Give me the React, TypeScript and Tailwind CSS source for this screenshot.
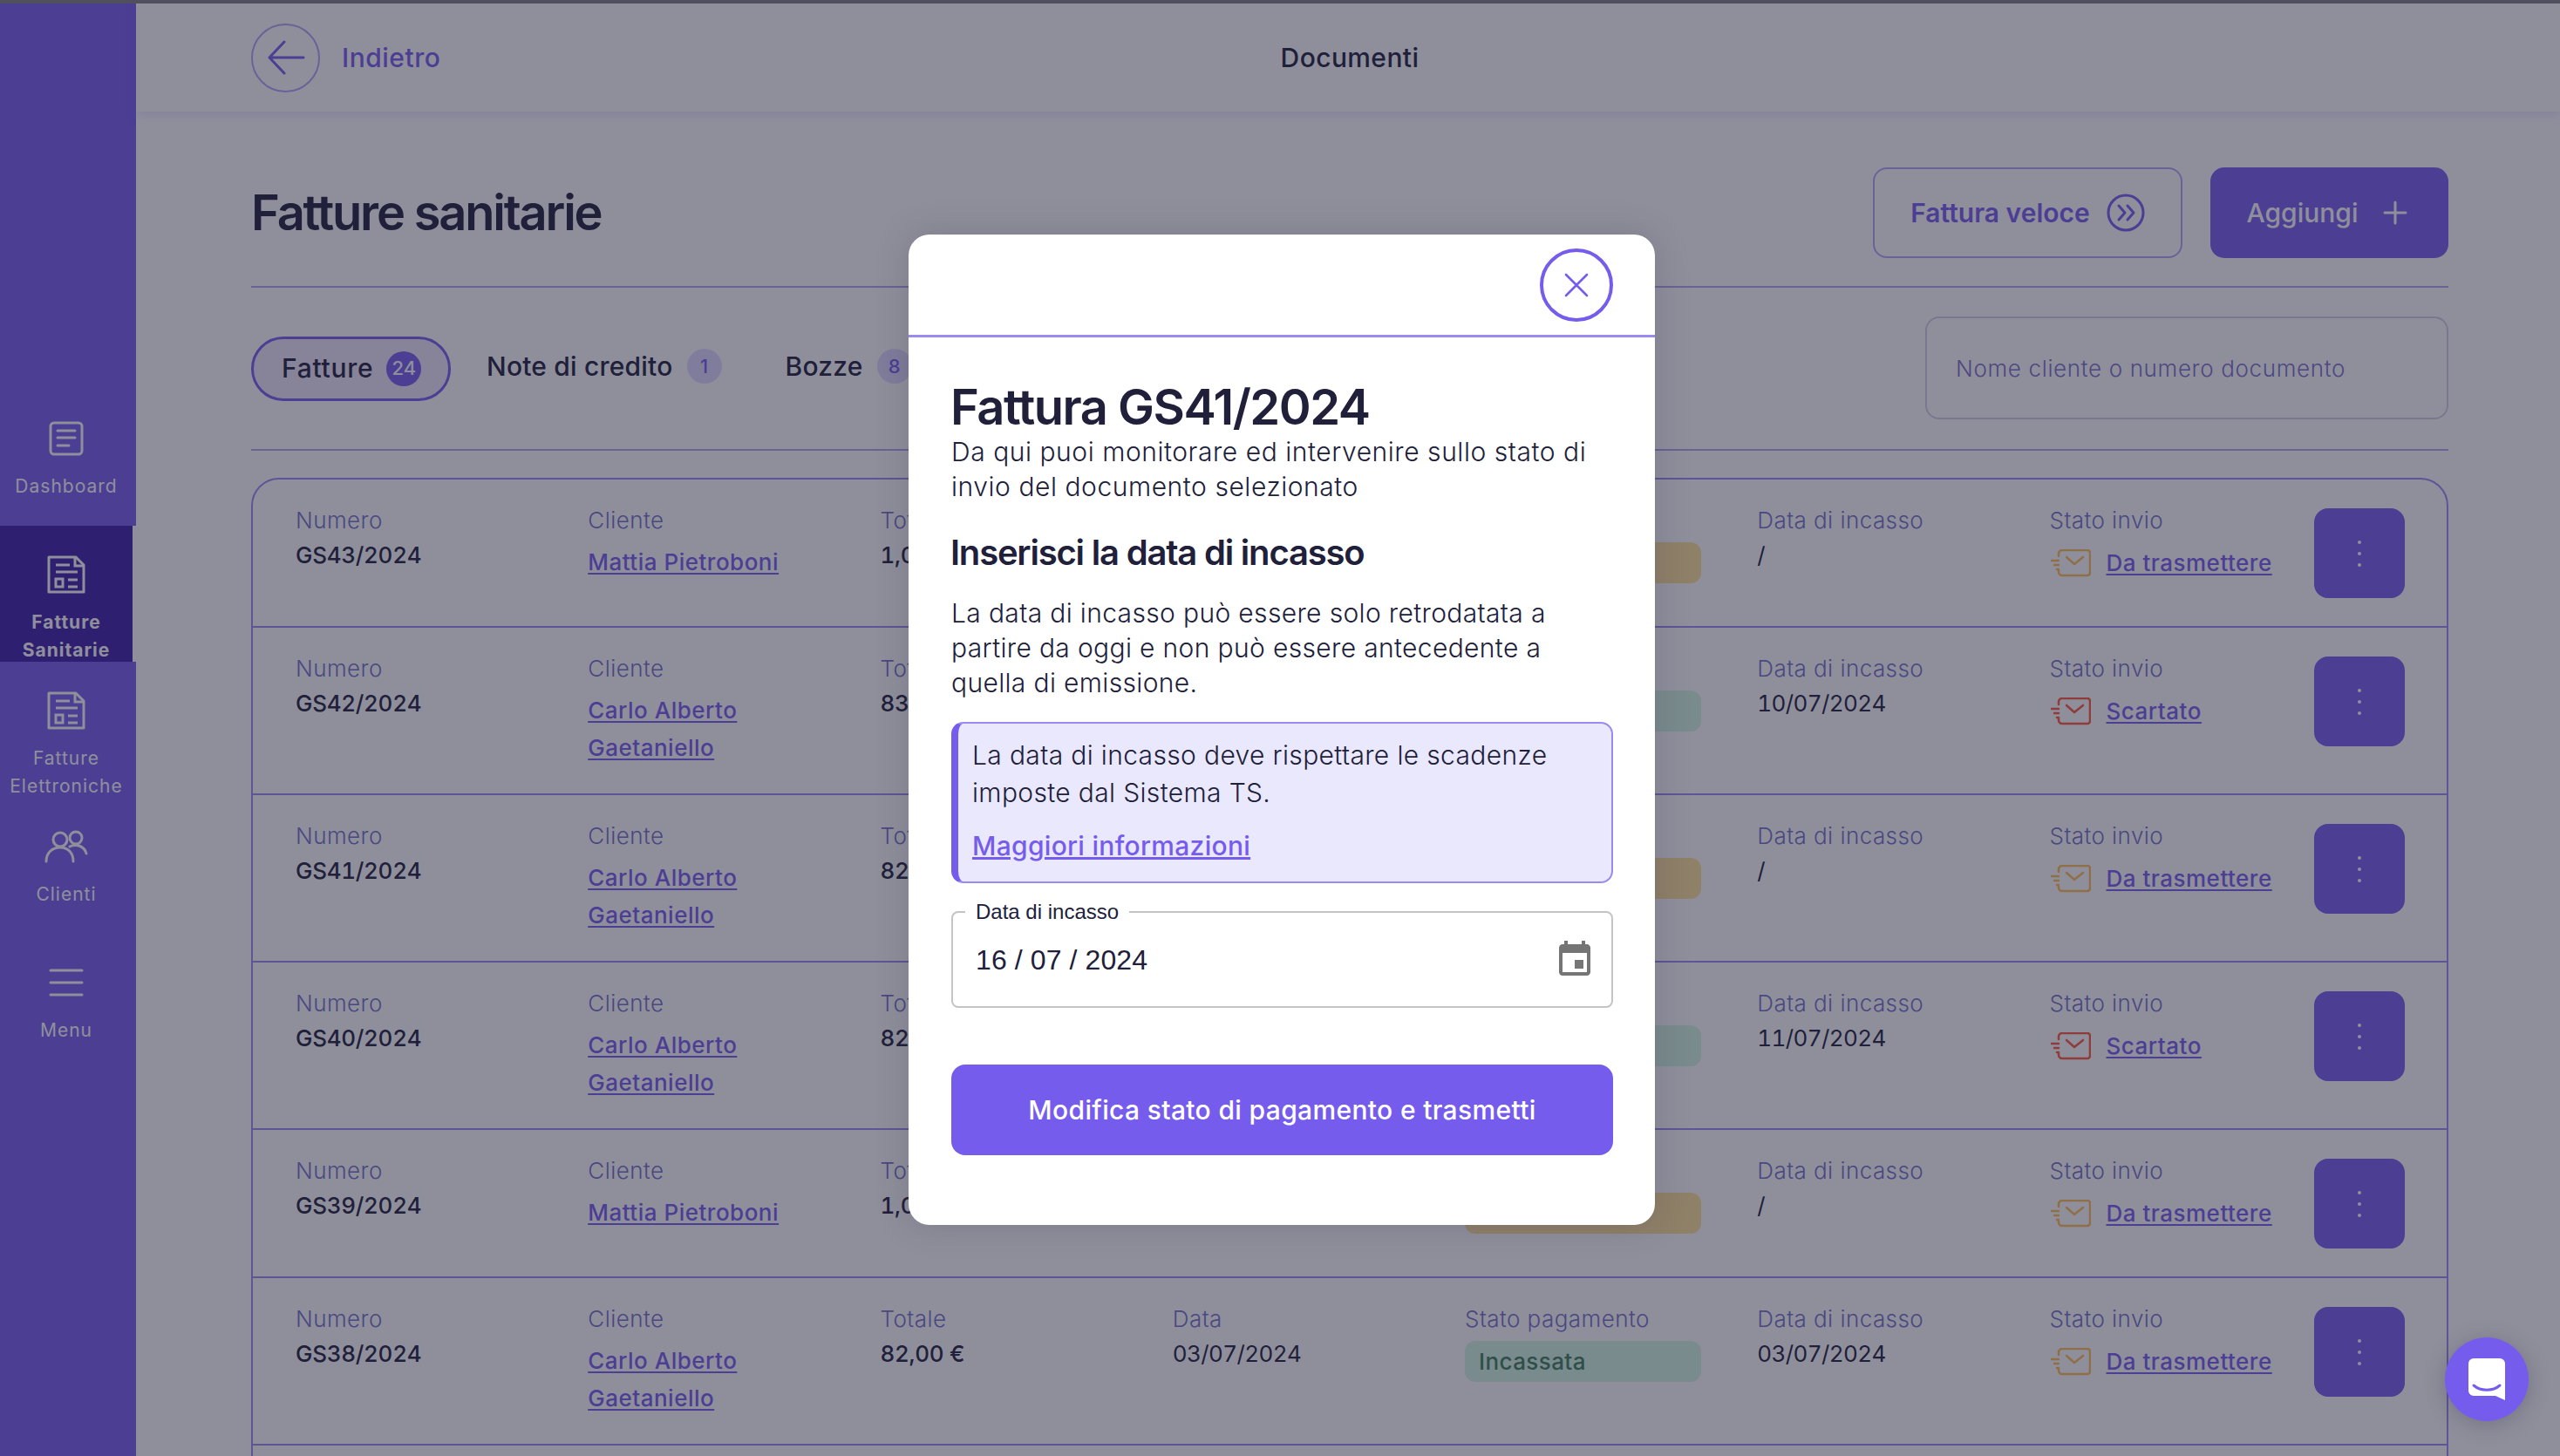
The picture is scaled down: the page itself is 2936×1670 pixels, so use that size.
import React from "react";

const F = "[font-family:Inter,'Liberation_Sans',sans-serif]";

function DashIcon() {
  return (
    <svg width="40" height="40" viewBox="0 0 40 40" fill="none" stroke="#ffffff" strokeWidth="3" strokeLinecap="round" className="block">
      <rect x="2" y="2" width="36" height="36" rx="4" />
      <path d="M10 11H30M10 19H30M10 28H23" />
    </svg>
  );
}
function DocIcon() {
  return (
    <svg width="44" height="44" viewBox="0 0 44 44" fill="none" stroke="#ffffff" strokeWidth="3" className="block">
      <path d="M2 2H33L42 11V42H2Z" strokeLinejoin="round" />
      <path d="M32 2V12H42" />
      <path d="M10 11H26M10 19H35M24 28H35M24 36H35" />
      <rect x="10" y="27" width="8" height="9" />
    </svg>
  );
}
function PeopleIcon() {
  return (
    <svg width="50" height="38" viewBox="0 0 50 38" fill="none" stroke="#ffffff" strokeWidth="3" strokeLinecap="round" className="block">
      <circle cx="18" cy="11" r="8" />
      <path d="M2 36C2 26 9 20 18 20C27 20 33 26 33 36" />
      <circle cx="36" cy="9" r="7" />
      <path d="M29 19C37 15 46 19 48 27" />
    </svg>
  );
}
function MenuIcon() {
  return (
    <svg width="40" height="32" viewBox="0 0 40 32" fill="none" stroke="#ffffff" strokeWidth="3" strokeLinecap="round" className="block">
      <path d="M2 2H38M2 16H38M2 30H38" />
    </svg>
  );
}

function SideItem({ icon, lines, active }: { icon: React.ReactNode; lines: string[]; active?: boolean }) {
  return (
    <div className={`h-[156px] shrink-0 overflow-hidden flex flex-col items-center ${active ? "bg-[#3c1ea6] border-r-4 border-white" : "pr-[4px]"}`}>
      <div className="flex items-center justify-center h-[95px] shrink-0 pt-[17px]">{icon}</div>
      <div className={`shrink-0 text-white text-center text-[21px] leading-[32px] tracking-[1px] w-[152px] ${active ? "font-bold" : "font-normal"}`}>
        {lines.map((l) => (
          <div key={l}>{l}</div>
        ))}
      </div>
    </div>
  );
}

function Mail({ color }: { color: string }) {
  return (
    <svg width="46" height="32" viewBox="0 0 46 32" fill="none" stroke={color} strokeWidth="2.6" strokeLinecap="round" strokeLinejoin="round" className="block shrink-0">
      <path d="M9 8V5a4 4 0 0 1 4-4H42a3 3 0 0 1 3 3V27a3 3 0 0 1-3 3H13a4 4 0 0 1-4-4v-2" />
      <path d="M18 9L27 17L37 9" />
      <path d="M1 13H9M4 18H9M7 23H9" />
    </svg>
  );
}

type R = { n: string; c: string[]; t: string; d: string; paid: boolean; inc: string; scart: boolean; h: string };
const CAG = ["Carlo Alberto", "Gaetaniello"];
const MP = ["Mattia Pietroboni"];
const rows: R[] = [
  { n: "GS43/2024", c: MP, t: "1,000,00 €", d: "05/07/2024", paid: false, inc: "/", scart: false, h: "h-[170px]" },
  { n: "GS42/2024", c: CAG, t: "83,00 €", d: "04/07/2024", paid: true, inc: "10/07/2024", scart: true, h: "h-[192px]" },
  { n: "GS41/2024", c: CAG, t: "82,00 €", d: "04/07/2024", paid: false, inc: "/", scart: false, h: "h-[192px]" },
  { n: "GS40/2024", c: CAG, t: "82,00 €", d: "03/07/2024", paid: true, inc: "11/07/2024", scart: true, h: "h-[192px]" },
  { n: "GS39/2024", c: MP, t: "1,000,00 €", d: "03/07/2024", paid: false, inc: "/", scart: false, h: "h-[170px]" },
  { n: "GS38/2024", c: CAG, t: "82,00 €", d: "03/07/2024", paid: true, inc: "03/07/2024", scart: false, h: "h-[192px]" },
];

const label = "text-[26px] leading-[36px] text-[#7470c6] font-light tracking-[0.45px]";
const valueBase = "mt-[2px] text-[26px] leading-[40px] text-[#20203a] tabular-nums";
const link = "text-[26px] leading-[43px] font-medium text-[#765ced] underline underline-offset-[3px] tracking-[0.5px]";

function Col({ l, children, w = "w-[335.25px]" }: { l: string; children: React.ReactNode; w?: string }) {
  return (
    <div className={`${w} shrink-0`}>
      <div className={label}>{l}</div>
      {children}
    </div>
  );
}

function Row({ r }: { r: R }) {
  return (
    <div className={`${r.h} border-b-2 border-[#9a8af0] pl-[49px] pt-[29px] flex`}>
      <Col l="Numero">
        <div className={`${valueBase} font-medium tracking-[-0.3px]`}>{r.n}</div>
      </Col>
      <Col l="Cliente">
        <div className="mt-[8px]">
          {r.c.map((x) => (
            <div key={x} className={link}>{x}</div>
          ))}
        </div>
      </Col>
      <Col l="Totale">
        <div className={`${valueBase} font-medium tracking-[-0.3px]`}>{r.t}</div>
      </Col>
      <Col l="Data">
        <div className={`${valueBase} font-normal tracking-[-0.6px]`}>{r.d}</div>
      </Col>
      <Col l="Stato pagamento">
        <div className={`mt-[7px] w-[271px] h-[47px] rounded-[12px] flex items-center pl-[16px] text-[26px] font-medium tracking-[0.4px] ${r.paid ? "bg-[#d4f6e0] text-[#3e7e5a]" : "bg-[#ffe096] text-[#8a6a20]"}`}>
          {r.paid ? "Incassata" : "Da incassare"}
        </div>
      </Col>
      <Col l="Data di incasso">
        <div className={`${valueBase} font-normal tracking-[-0.6px]`}>{r.inc}</div>
      </Col>
      <Col l="Stato invio" w="w-[303.5px]">
        <div className="mt-[9px] flex items-center gap-[18px] h-[43px] pl-[1px]">
          <Mail color={r.scart ? "#ff5a3c" : "#ffbe55"} />
          <span className={link}>{r.scart ? "Scartato" : "Da trasmettere"}</span>
        </div>
      </Col>
      <div className="mt-[4px] w-[104px] h-[103px] shrink-0 rounded-[16px] bg-[#765ced] flex flex-col items-center justify-center gap-[9px]">
        <span className="w-[4px] h-[4px] rounded-full bg-white" />
        <span className="w-[4px] h-[4px] rounded-full bg-white" />
        <span className="w-[4px] h-[4px] rounded-full bg-white" />
      </div>
    </div>
  );
}

function Badge({ n, on }: { n: string; on?: boolean }) {
  return (
    <span className={`w-[40px] h-[40px] rounded-full flex items-center justify-center text-[22px] tracking-normal ${on ? "bg-[#765ced] text-white" : "bg-[#e0dbff] text-[#765ced]"}`}>{n}</span>
  );
}

export default function App() {
  return (
    <div className={`${F} relative w-[2936px] h-[1670px] overflow-hidden bg-white flex flex-col`}>
      <div className="h-[4px] bg-[#808080] shrink-0" />
      <div className="flex flex-1 min-h-0">
        <aside className="w-[156px] shrink-0 bg-[#765ced] flex flex-col justify-center">
          <SideItem icon={<DashIcon />} lines={["Dashboard"]} />
          <SideItem active icon={<DocIcon />} lines={["Fatture", "Sanitarie"]} />
          <SideItem icon={<DocIcon />} lines={["Fatture", "Elettroniche"]} />
          <SideItem icon={<PeopleIcon />} lines={["Clienti"]} />
          <SideItem icon={<MenuIcon />} lines={["Menu"]} />
        </aside>
        <main className="flex-1 min-w-0 flex flex-col">
          <header className="h-[124px] shrink-0 flex items-center pl-[132px] pr-[128px] shadow-[0_4px_12px_rgba(118,92,237,0.18)]">
            <div className="flex-1 flex items-center gap-[25px]">
              <div className="w-[79px] h-[79px] rounded-full border-2 border-[#b1a4f4] flex items-center justify-center">
                <svg width="44" height="40" viewBox="0 0 44 40" fill="none" stroke="#765ced" strokeWidth="3" strokeLinecap="round" strokeLinejoin="round">
                  <path d="M42 20H3M20 2L3 20L20 38" />
                </svg>
              </div>
              <span className="text-[30px] font-medium text-[#765ced] tracking-[0.5px]">Indietro</span>
            </div>
            <div className="text-[30px] font-medium text-[#20203a] tracking-[0.4px]">Documenti</div>
            <div className="flex-1" />
          </header>

          <div className="pl-[132px] pr-[128px] flex-1 min-h-0">
            <div className="mt-[64px] h-[104px] flex items-center justify-between">
              <h1 className="text-[56px] font-semibold tracking-[-2.2px] text-[#20203a]">Fatture sanitarie</h1>
              <div className="flex gap-[32px]">
                <div className="w-[355px] h-[104px] rounded-[16px] border-2 border-[#b1a4f4] flex items-center justify-center gap-[19px] text-[30px] font-semibold text-[#765ced]">
                  Fattura veloce
                  <svg width="44" height="44" viewBox="0 0 44 44" fill="none" stroke="#765ced" strokeWidth="3" strokeLinecap="round" strokeLinejoin="round">
                    <circle cx="22" cy="22" r="20" />
                    <path d="M14 14L21 22L14 30M24 14L31 22L24 30" />
                  </svg>
                </div>
                <div className="w-[273px] h-[104px] rounded-[16px] bg-[#765ced] flex items-center justify-center gap-[28px] text-[30px] font-medium text-white pr-[6px]">
                  Aggiungi
                  <svg width="28" height="28" viewBox="0 0 28 28" fill="none" stroke="#ffffff" strokeWidth="3" strokeLinecap="round">
                    <path d="M14 2V26M2 14H26" />
                  </svg>
                </div>
              </div>
            </div>
            <div className="mt-[32px] h-[2px] bg-[#b1a4f4]" />
            <div className="h-[185px] flex items-center justify-between">
              <div className="flex items-center">
                <div className="w-[229px] h-[74px] rounded-full border-[3px] border-[#765ced] bg-[#eee8f8] flex items-center pl-[32px] gap-[15px] text-[30px] font-medium text-[#20203a] tracking-[0.7px]">
                  Fatture <Badge n="24" on />
                </div>
                <div className="ml-[41px] -mt-[5px] flex items-center gap-[16px] text-[30px] font-medium text-[#20203a] tracking-[0.2px]">
                  Note di credito <Badge n="1" />
                </div>
                <div className="ml-[73px] -mt-[5px] flex items-center gap-[16px] text-[30px] font-medium text-[#20203a] tracking-[0.2px]">
                  Bozze <Badge n="8" />
                </div>
              </div>
              <div className="-mt-[1px] w-[600px] h-[118px] rounded-[16px] border-2 border-[#d3cfe6] flex items-center pl-[33px] text-[26px] font-light text-[#7a70c8] tracking-[0.65px]">
                Nome cliente o numero documento
              </div>
            </div>
            <div className="h-[2px] bg-[#b1a4f4]" />
            <div className="mt-[31px] border-2 border-[#9a8af0] rounded-t-[32px] h-[1200px]">
              {rows.map((r) => (
                <Row key={r.n} r={r} />
              ))}
            </div>
          </div>
        </main>
      </div>

      <div className="absolute inset-0 bg-[#20203a]/50 flex items-center justify-center pl-[4px] pt-[4px]">
        <div className="w-[856px] h-[1136px] bg-white rounded-[24px] shadow-[0_0_40px_rgba(32,32,58,0.18)] flex flex-col">
          <div className="h-[118px] shrink-0 border-b-[3px] border-[#9a8af0] flex items-start justify-end pt-[16px] pr-[48px]">
            <div className="w-[84px] h-[84px] rounded-full border-4 border-[#765ced] flex items-center justify-center">
              <svg width="28" height="28" viewBox="0 0 28 28" fill="none" stroke="#765ced" strokeWidth="2.6" strokeLinecap="round">
                <path d="M2 2L26 26M26 2L2 26" />
              </svg>
            </div>
          </div>
          <div className="pl-[49px] pr-[48px] pt-[49px] flex flex-col">
            <h2 className="-ml-[1px] text-[56px] leading-[62px] font-semibold tracking-[-1.5px] text-[#20203a]">Fattura GS41/2024</h2>
            <p className="text-[30px] leading-[40px] font-light text-[#20203a] tracking-[0.55px]">Da qui puoi monitorare ed intervenire sullo stato di invio del documento selezionato</p>
            <h3 className="-ml-[1px] mt-[32px] text-[40px] leading-[48px] font-semibold tracking-[-1.2px] text-[#20203a]">Inserisci la data di incasso</h3>
            <p className="mt-[25px] text-[30px] leading-[40px] font-light text-[#20203a] tracking-[0.35px]">La data di incasso può essere solo retrodatata a partire da oggi e non può essere antecedente a quella di emissione.</p>
            <div className="mt-[25px] h-[185px] rounded-[14px] border-2 border-l-8 border-[#9a8af0] border-l-[#765ced] bg-[#eae8fc] pl-[16px] pt-[15px]">
              <p className="text-[30px] leading-[43px] font-light text-[#20203a] tracking-[0.35px]">La data di incasso deve rispettare le scadenze imposte dal Sistema TS.</p>
              <a className="block mt-[18px] text-[30px] leading-[43px] font-medium text-[#765ced] underline tracking-[0.3px]">Maggiori informazioni</a>
            </div>
            <div className="relative mt-[32px] h-[111px] rounded-[8px] border-2 border-[#c4c4c4] flex items-center justify-between pl-[26px] pr-[18px] [font-family:'Liberation_Sans',sans-serif]">
              <span className="absolute left-[14px] -top-[14px] bg-white px-[12px] text-[24px] leading-[26px] text-[#20203a]">Data di incasso</span>
              <span className="text-[32px] text-[#20203a] tracking-[0.1px]">16 / 07 / 2024</span>
              <svg width="48" height="48" viewBox="0 0 24 24" fill="#757575">
                <path d="M17 12h-5v5h5v-5zM16 1v2H8V1H6v2H5c-1.11 0-1.99.9-1.99 2L3 19c0 1.1.89 2 2 2h14c1.1 0 2-.9 2-2V5c0-1.1-.9-2-2-2h-1V1h-2zm3 18H5V8h14v11z" />
              </svg>
            </div>
            <div className="mt-[65px] h-[104px] rounded-[16px] bg-[#765ced] flex items-center justify-center text-[30px] font-medium text-white tracking-[0.35px]">
              Modifica stato di pagamento e trasmetti
            </div>
          </div>
        </div>
      </div>

      <div className="absolute left-[2804px] top-[1534px] w-[96px] h-[96px] rounded-full bg-[#765ced] shadow-[0_4px_24px_rgba(32,32,58,0.25)] flex items-center justify-center">
        <svg width="42" height="48" viewBox="0 0 42 48" className="block">
          <path d="M6 0H36a6 6 0 0 1 6 6V48L31 43H6a6 6 0 0 1-6-6V6a6 6 0 0 1 6-6Z" fill="#ffffff" />
          <path d="M6 31C14 38 28 38 36 31" fill="none" stroke="#765ced" strokeWidth="3" strokeLinecap="round" />
        </svg>
      </div>
    </div>
  );
}
